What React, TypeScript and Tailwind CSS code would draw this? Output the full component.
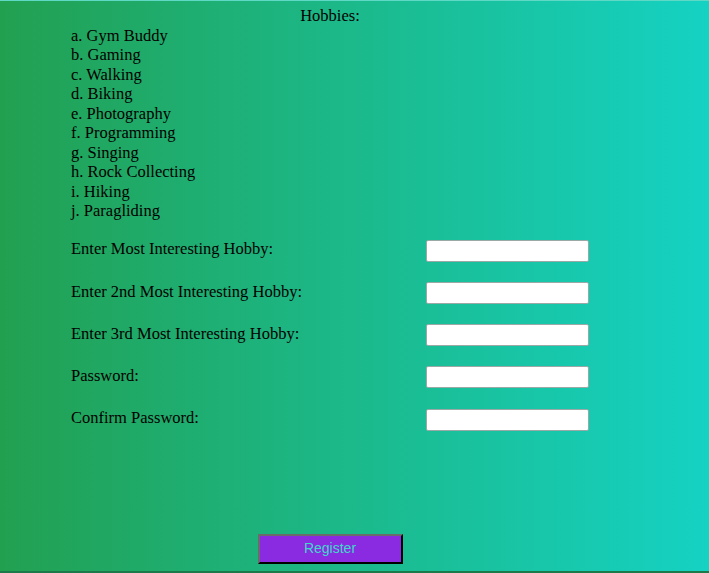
const hobbies = [
  "a. Gym Buddy",
  "b. Gaming",
  "c. Walking",
  "d. Biking",
  "e. Photography",
  "f. Programming",
  "g. Singing",
  "h. Rock Collecting",
  "i. Hiking",
  "j. Paragliding",
];

const fields = [
  { label: "Enter Most Interesting Hobby:", type: "text" },
  { label: "Enter 2nd Most Interesting Hobby:", type: "text" },
  { label: "Enter 3rd Most Interesting Hobby:", type: "text" },
  { label: "Password:", type: "password" },
  { label: "Confirm Password:", type: "password" },
];

const App = () => {
  return (
    <div className="flex flex-col w-full h-[573px] bg-linear-to-r from-[#22a050] to-[#15d2c3] border-t border-t-[#5fd8c6] border-b-2 border-b-[#1a7a4a] font-['Liberation_Serif',serif] text-[16.5px] text-black">
      <form className="flex flex-col w-[518px] ml-[71px] pt-[5px]">
        <p className="text-center leading-[19.5px]">Hobbies:</p>
        <ul className="flex flex-col">
          {hobbies.map((h) => (
            <li key={h} className="leading-[19.5px]">
              {h}
            </li>
          ))}
        </ul>
        <div className="flex flex-col mt-[9px]">
          {fields.map((f) => (
            <div
              key={f.label}
              className="flex justify-between items-center h-[42.25px]"
            >
              <label className="pb-[2px]">{f.label}</label>
              <input
                type={f.type}
                className="w-[163px] h-[22px] bg-white border border-[#9aa8a6] rounded-[2px] outline-none"
              />
            </div>
          ))}
        </div>
        <button
          type="submit"
          className="self-center mt-[93px] w-[145px] h-[30px] bg-[#8a2be2] border-2 border-t-[#6b6b6b] border-l-[#6b6b6b] border-r-black border-b-black text-[#40d8c8] text-[14px] font-['Liberation_Sans',Arial,sans-serif]"
        >
          Register
        </button>
      </form>
    </div>
  );
};

export default App;
